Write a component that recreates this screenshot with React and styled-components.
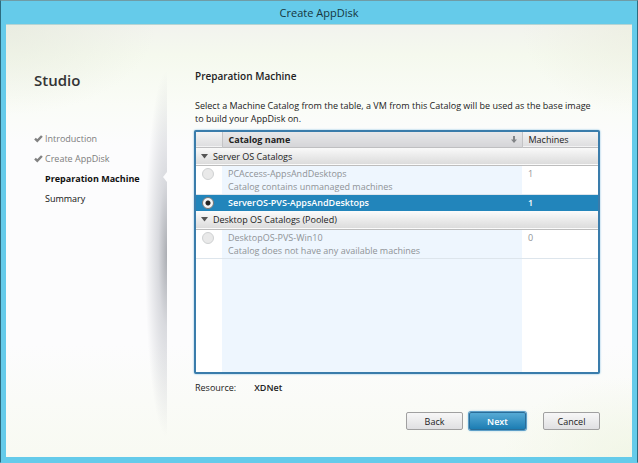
import { useState } from "react";
import styled, { createGlobalStyle } from "styled-components";

const GlobalStyle = createGlobalStyle`
  * {
    box-sizing: border-box;
  }
  body {
    margin: 0;
    font-family: "Open Sans", "Noto Sans", sans-serif;
    font-size: 9px;
    line-height: 13px;
    color: #222;
  }
  button, input {
    font: inherit;
    color: inherit;
    margin: 0;
  }
`;

const Window = styled.div`
  display: flex;
  flex-direction: column;
  min-height: 100vh;
  padding: 0 5px 5px;
  background: #65cbea;
  border: 1px solid #2c6c80;
  border-top-color: #6f9ca6;
  border-bottom-color: #65cbea;
`;
const TitleBar = styled.header`
  display: flex;
  align-items: center;
  justify-content: center;
  height: 23px;
  font-size: 11px;
  color: #163640;
`;
const Content = styled.div`
  flex: 1;
  display: grid;
  grid-template-columns: 161px 1fr;
  border-top: 1px solid #b5d4d4;
  background:
    radial-gradient(ellipse 150px 90px at top left, rgba(230, 234, 220, 0.7), transparent),
    radial-gradient(ellipse 110px 90px at top right, rgba(236, 238, 224, 0.7), transparent),
    radial-gradient(ellipse 130px 80px at bottom right, rgba(240, 245, 228, 0.8), transparent),
    linear-gradient(#f2f3ee 0, #f5f9ee 30px, #fafcf7 80px, #fcfcfd 120px, #fcfcfd 320px, #f8faf2 100%);
`;

const Sidebar = styled.aside`
  display: flex;
  flex-direction: column;
  gap: 41px;
  padding: 44px 0 0 28px;
`;
const Brand = styled.h1`
  margin: 0;
  font-size: 15px;
  line-height: 22px;
  font-weight: 600;
  color: #333;
`;
const Steps = styled.ol`
  display: flex;
  flex-direction: column;
  gap: 7px;
  margin: 0;
  padding: 0;
  list-style: none;
`;
const Step = styled.li`
  display: grid;
  grid-template-columns: 11px 1fr;
  align-items: center;
  white-space: nowrap;
  color: ${(props) => (props.$state === "done" ? "#7c7c7c" : "#111")};
  font-weight: ${(props) => (props.$state === "current" ? 700 : 400)};
`;
const StepName = styled.span`
  grid-column: 2;
`;

const Main = styled.main`
  position: relative;
  display: flex;
  flex-direction: column;
  min-width: 0;
  padding: 44px 32px 27px 28px;

  /* soft shade the page throws on the step list */
  &::before {
    content: "";
    position: absolute;
    top: 46px;
    bottom: 20px;
    right: 100%;
    width: 22px;
    background: radial-gradient(
      ellipse 22px 50% at right center,
      rgba(90, 95, 105, 0.5),
      rgba(110, 115, 130, 0.25) 40%,
      transparent
    );
  }
  /* notch pointing at the current step */
  &::after {
    content: "";
    position: absolute;
    top: 147px;
    right: 100%;
    border: 5px solid transparent;
    border-left: 0;
    border-right: 4px solid #fcfcfd;
  }
`;
const Heading = styled.h2`
  margin: 0;
  font-size: 10px;
  line-height: 14px;
  font-weight: 600;
`;
const Intro = styled.p`
  margin: 16px 0 5px;
`;

const TableFrame = styled.div`
  flex: 1;
  display: flex;
  margin: 0 0 0 -1px;
  border: 2px solid #3a7cab;
  border-radius: 2px;
  box-shadow: 0 0 2px #6fb4dc;
  background: #fff;
`;
const Table = styled.table`
  width: 100%;
  table-layout: fixed;
  border-collapse: collapse;

  th, td {
    padding: 0;
    text-align: left;
    vertical-align: top;
  }
`;
const HeadRow = styled.tr`
  height: 15px;
  background: linear-gradient(#f3f3f4, #dedee0);
  border-bottom: 1px solid #bfbfc1;
`;
const HeadCell = styled.th`
  font-weight: ${(props) => (props.$sorted ? 700 : 400)};
  border-right: ${(props) => (props.$last ? "0" : "1px solid #c4c4c6")};
  background: ${(props) => (props.$sorted ? "linear-gradient(#e7e7e9, #d5d5d8)" : "none")};
`;
const HeadButton = styled.button`
  display: flex;
  align-items: center;
  justify-content: space-between;
  width: 100%;
  height: 14px;
  padding: 0 5px 0 6px;
  border: 0;
  background: none;
`;
const GroupRow = styled.tr`
  height: 18px;
  background: linear-gradient(#fbfbfb, #dcdcdc);
  border-bottom: 1px solid #bdbdbd;
`;
const GroupButton = styled.button`
  display: flex;
  align-items: center;
  gap: 5px;
  width: 100%;
  height: 17px;
  padding: 0 5px;
  border: 0;
  background: none;

  svg {
    transform: ${(props) => (props.$open ? "none" : "rotate(-90deg)")};
  }
`;
const Row = styled.tr`
  height: ${(props) => (props.$tall ? "29px" : "17px")};
  color: ${(props) => (props.$selected ? "#fff" : "#8f9397")};
  font-weight: ${(props) => (props.$selected ? 600 : 400)};
  background: ${(props) => (props.$selected ? "#2285bb" : "#fff")};
  border-bottom: ${(props) => (props.$selected ? "0" : "1px solid #dde5ec")};
`;
const NameCell = styled.td`
  background: ${(props) => (props.$selected ? "none" : "#eef6fe")};

  label, small {
    display: block;
    padding: 1px 0 0 6px;
    font-size: 9px;
  }
  small {
    padding-top: 0;
  }
`;
const CountCell = styled.td`
  && {
    padding: 1px 0 0 6px;
  }
`;
const RadioCell = styled.td`
  && {
    padding: 2px 0 0 6px;
  }
`;
const Radio = styled.input.attrs({ type: "radio" })`
  appearance: none;
  display: block;
  width: 12px;
  height: 12px;
  border: 1px solid #777;
  border-radius: 50%;
  background: radial-gradient(circle, #222 0, #222 2px, #f4f4f4 3px);

  &:not(:checked) {
    border-color: #cfd1d2;
    background: #e9e9e9;
  }
`;
const Filler = styled.tr`
  height: auto;
`;

const Resource = styled.dl`
  display: flex;
  gap: 18px;
  margin: 7px 0 18px;

  dd {
    margin: 0;
    font-weight: 600;
  }
`;
const Actions = styled.footer`
  display: flex;
  align-items: center;
  justify-content: flex-end;
  gap: 6px;
`;
const Button = styled.button`
  width: 57px;
  height: 18px;
  padding: 0;
  border: 1px solid ${(props) => (props.$primary ? "#2a6d98" : "#a0a0a0")};
  border-radius: 2px;
  font-weight: ${(props) => (props.$primary ? 600 : 400)};
  color: ${(props) => (props.$primary ? "#fff" : "#222")};
  background: ${(props) =>
    props.$primary ? "linear-gradient(#56aad5, #1c7db3)" : "linear-gradient(#f7f7f7, #e0e0e2)"};
  box-shadow: ${(props) => (props.$primary ? "0 0 0 1px #5e9fc8, 0 0 3px #58addc" : "none")};

  &:last-child {
    margin-left: 11px;
  }
`;

const Check = () => (
  <svg width="9" height="8" viewBox="0 0 9 8" aria-hidden="true">
    <path d="M1 3.7 3.3 5.9 7.9 1" fill="none" stroke="#828282" strokeWidth="2.4" />
  </svg>
);

const SortArrow = () => (
  <svg width="6" height="7" viewBox="0 0 6 7" aria-hidden="true">
    <path d="M2 0h2v3.4h2L3 7 0 3.4h2z" fill="#818386" />
  </svg>
);

const Triangle = () => (
  <svg width="7" height="5" viewBox="0 0 7 5" aria-hidden="true">
    <path d="M0 0h7L3.5 4.5z" fill="#555" />
  </svg>
);

const steps = [
  { name: "Introduction", state: "done" },
  { name: "Create AppDisk", state: "done" },
  { name: "Preparation Machine", state: "current" },
  { name: "Summary", state: "next" },
];

const groups = [
  {
    name: "Server OS Catalogs",
    catalogs: [
      { name: "PCAccess-AppsAndDesktops", note: "Catalog contains unmanaged machines", machines: 1 },
      { name: "ServerOS-PVS-AppsAndDesktops", machines: 1 },
    ],
  },
  {
    name: "Desktop OS Catalogs (Pooled)",
    catalogs: [
      { name: "DesktopOS-PVS-Win10", note: "Catalog does not have any available machines", machines: 0 },
    ],
  },
];

const CatalogRow = ({ catalog, selected, onSelect }) => (
  <Row $tall={Boolean(catalog.note)} $selected={selected}>
    <RadioCell>
      <Radio
        id={catalog.name}
        name="catalog"
        checked={selected}
        disabled={Boolean(catalog.note)}
        onChange={() => onSelect(catalog.name)}
      />
    </RadioCell>
    <NameCell $selected={selected}>
      <label htmlFor={catalog.name}>{catalog.name}</label>
      {catalog.note && <small>{catalog.note}</small>}
    </NameCell>
    <CountCell>{catalog.machines}</CountCell>
  </Row>
);

const CatalogGroup = ({ group, selected, onSelect }) => {
  const [open, setOpen] = useState(true);
  return (
    <>
      <GroupRow>
        <td colSpan={3}>
          <GroupButton type="button" $open={open} aria-expanded={open} onClick={() => setOpen(!open)}>
            <Triangle />
            {group.name}
          </GroupButton>
        </td>
      </GroupRow>
      {open &&
        group.catalogs.map((catalog) => (
          <CatalogRow
            key={catalog.name}
            catalog={catalog}
            selected={selected === catalog.name}
            onSelect={onSelect}
          />
        ))}
    </>
  );
};

const RadioCol = styled.col`
  width: 26px;
`;
const CountCol = styled.col`
  width: 76px;
`;

const App = () => {
  const [selected, setSelected] = useState("ServerOS-PVS-AppsAndDesktops");

  return (
    <Window>
      <GlobalStyle />
      <TitleBar>Create AppDisk</TitleBar>
      <Content>
        <Sidebar>
          <Brand>Studio</Brand>
          <Steps>
            {steps.map((step) => (
              <Step key={step.name} $state={step.state}>
                {step.state === "done" && <Check />}
                <StepName>{step.name}</StepName>
              </Step>
            ))}
          </Steps>
        </Sidebar>
        <Main>
          <Heading>Preparation Machine</Heading>
          <Intro>
            Select a Machine Catalog from the table, a VM from this Catalog will be used as the base image
            to build your AppDisk on.
          </Intro>
          <TableFrame>
            <Table>
              <colgroup>
                <RadioCol />
                <col />
                <CountCol />
              </colgroup>
              <thead>
                <HeadRow>
                  <HeadCell />
                  <HeadCell $sorted aria-sort="descending">
                    <HeadButton type="button">
                      Catalog name
                      <SortArrow />
                    </HeadButton>
                  </HeadCell>
                  <HeadCell $last>
                    <HeadButton type="button">Machines</HeadButton>
                  </HeadCell>
                </HeadRow>
              </thead>
              <tbody>
                {groups.map((group) => (
                  <CatalogGroup
                    key={group.name}
                    group={group}
                    selected={selected}
                    onSelect={setSelected}
                  />
                ))}
                <Filler>
                  <td />
                  <NameCell />
                  <td />
                </Filler>
              </tbody>
            </Table>
          </TableFrame>
          <Resource>
            <dt>Resource:</dt>
            <dd>XDNet</dd>
          </Resource>
          <Actions>
            <Button type="button">Back</Button>
            <Button type="button" $primary>Next</Button>
            <Button type="button">Cancel</Button>
          </Actions>
        </Main>
      </Content>
    </Window>
  );
};

export default App;
